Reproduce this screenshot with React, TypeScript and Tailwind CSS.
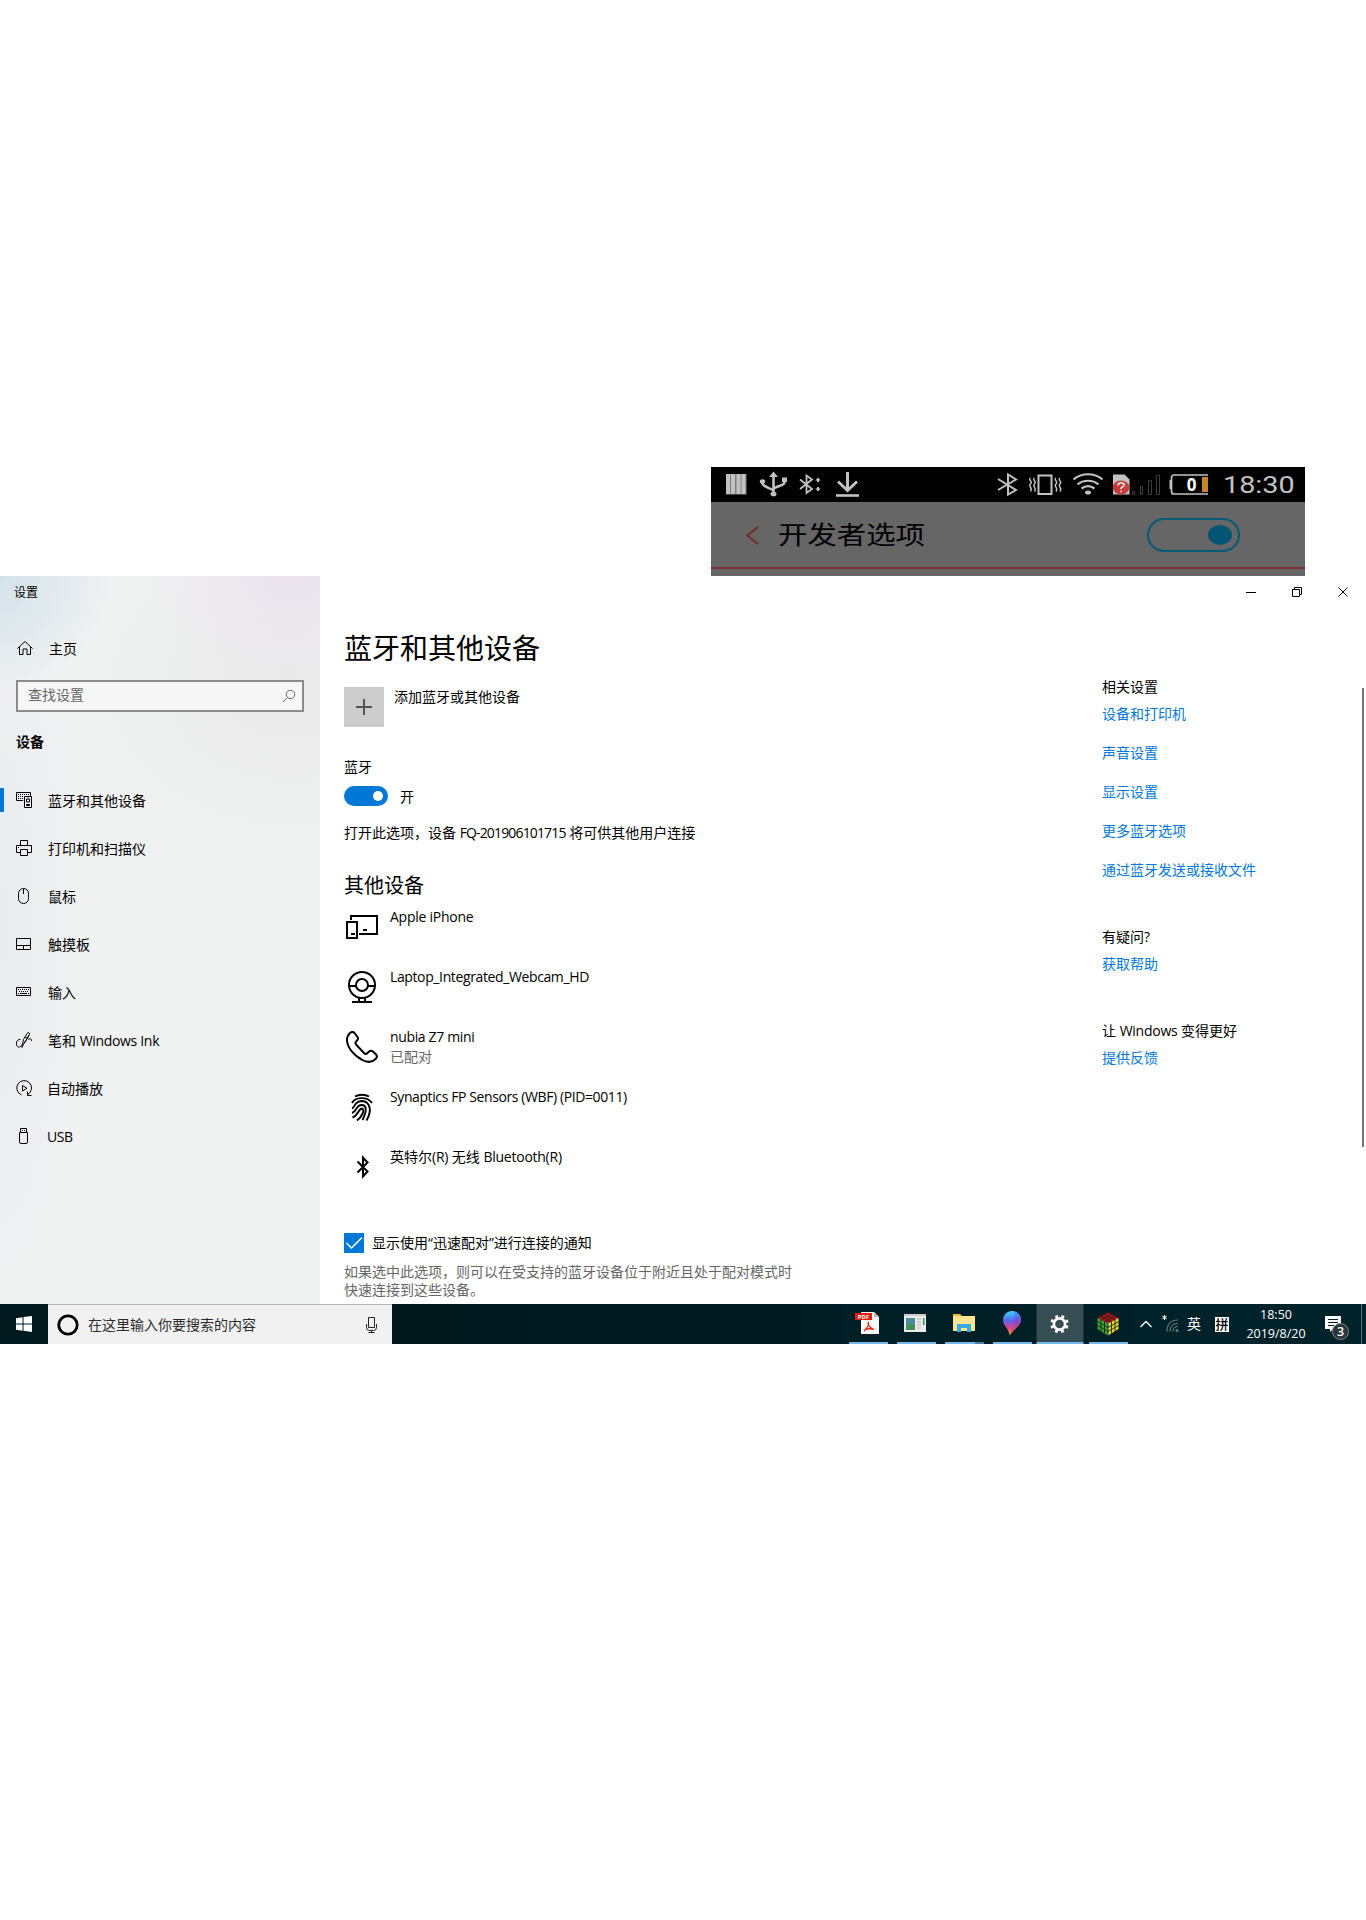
import type { ReactNode } from "react";

const FONT = "font-['Open_Sans','Noto_Sans_CJK_SC',sans-serif]";

function PhoneStatusBar() {
  return (
    <div className="flex h-[35px] bg-black text-[#c2c2c2]">
      <svg width="150" height="35" fill="none" stroke="#c2c2c2" strokeWidth="2">
        <path d="M15 7h20.500v20.500H15z" fill="#7e7e7e" stroke="none" />
        <path d="M17 7v20M22 7v20M27.500 7v20M32.500 7v20" strokeWidth="4" />
        <path d="M62.500 8v18M51.500 14.500v2c0 3.500 11 5 11 8M73.500 12.500v3c0 3.500-11 4-11 7" strokeWidth="2.600" />
        <path d="M58 10l4.500-5.500L67 10z" fill="#c2c2c2" stroke="none" />
        <ellipse cx="62.500" cy="27" rx="3" ry="2.300" fill="#c2c2c2" stroke="none" />
        <ellipse cx="51.500" cy="14.500" rx="2.700" ry="2.200" fill="#c2c2c2" stroke="none" />
        <path d="M71 10.500h5v4.500h-5z" fill="#c2c2c2" stroke="none" />
        <path d="M89 12.500l12 9.500-5.500 4V8.500l5.500 4-12 9.500" strokeWidth="1.800" />
        <path d="M107 12v3M107 20v3" />
        <path d="M104.300 13.500l2.700-3 2.700 3zM104.300 21.500l2.700 3 2.700-3z" fill="#c2c2c2" stroke="none" />
        <path d="M136.500 5v18M127 14.500l9.500 9 9.500-9" strokeWidth="3" />
        <path d="M125 28.500h23" strokeWidth="2.600" />
      </svg>
      <div className="grow" />
      <svg width="225" height="35" fill="none" stroke="#c2c2c2" strokeWidth="2">
        <g transform="translate(-103 0)">
          <path d="M118 12l18 11-8 4.500V7.500l8 5-18 10.500" strokeWidth="2" />
          <path d="M158.500 8.500h13v18.500h-13z" />
          <path d="M150.500 11c-3 2 3 3.500 0 6s3 3.500 0 7.500M154.500 11c-3 2 3 3.500 0 6s3 3.500 0 7.500M176 11c-3 2 3 3.500 0 6s3 3.500 0 7.500M180 11c-3 2 3 3.500 0 6s3 3.500 0 7.500" strokeWidth="1.400" />
          <path d="M193.500 12.500c8-7 21-7 29 0M197.500 17.500c6-5 15-5 21 0M201.500 21.500c4-3 9-3 13 0" strokeWidth="2.200" />
          <ellipse cx="208" cy="25.500" rx="3" ry="2" fill="#c2c2c2" stroke="none" />
          <path d="M233 7.500h11.500l5 5v15H233z" fill="#c2c2c2" stroke="none" />
          <ellipse cx="241" cy="20.500" rx="8.200" ry="7" fill="#c93a3a" stroke="none" />
          <path d="M238 18.500c0-3.500 6-3.500 6-.5 0 2-3 1.500-3 4M241 23.500v1.800" stroke="#ddd" strokeWidth="1.800" />
          <path d="M252.500 24.500h2v3h-2zM260.500 19.500h2v8h-2zM268.500 13.500h3v14h-3zM276.500 8.500h3v19h-3z" stroke="#3c3c3c" strokeWidth="1" />
          <rect x="291.500" y="8" width="39.500" height="19" rx="2.500" strokeWidth="1.700" />
          <path d="M290.500 13v9" strokeWidth="2" />
          <path d="M322 10h6v15h-6z" fill="#c6862d" stroke="none" />
        </g>
        <text x="208.500" y="23.500" textAnchor="middle" fontSize="17" fontWeight="700" fill="#fff" stroke="none" fontFamily="Open Sans">0</text>
      </svg>
      <div className="w-[97px] pl-[15px]">
        <span className="inline-block origin-left scale-x-[1.200] font-[Roboto] text-[24px] leading-[37px]">18:30</span>
      </div>
    </div>
  );
}

function PhoneHeader() {
  return (
    <div className="h-[74px] bg-[#666666]">
      <div className="flex h-[65px] items-center">
        <svg className="ml-[34px]" width="16" height="22" fill="none" stroke="#7d2226" strokeWidth="1.700">
          <path d="M13 3L2 11.500l11 8.500" />
        </svg>
        <span className="ml-[17px] inline-block w-[130px] origin-left scale-x-[1.200] whitespace-nowrap text-[24.500px] leading-[30px] text-black">开发者选项</span>
        <div className="ml-[239px] flex h-[34px] w-[93px] items-center justify-end rounded-[20px] border-2 border-[#075a76] pr-[6px]">
          <div className="h-[20px] w-[24px] rounded-[50%] bg-[#045473]" />
        </div>
      </div>
      <div className="h-[2px] bg-[#7e2f33]" />
    </div>
  );
}

function Glyph({ children, size = 16 }: { children: ReactNode; size?: number }) {
  return (
    <svg width={size} height={size} viewBox={`0 0 ${size} ${size}`} fill="none" stroke="#000" strokeWidth="1" className="shrink-0">
      {children}
    </svg>
  );
}

const NAV: { label: ReactNode; icon: ReactNode; active?: boolean }[] = [
  {
    label: "蓝牙和其他设备",
    active: true,
    icon: (
      <>
        <path d="M7 8.500H.5v-8h14V4M8.500 4.500h7v11h-7z" />
        <path d="M2 2.500h11M2 4.500h6M2 6.500h5" strokeDasharray="1 1" />
        <path d="M10.500 7h3v3h-3zM12 5.500v1M10.500 12.500h3v1h-3z" />
      </>
    ),
  },
  {
    label: "打印机和扫描仪",
    icon: <path d="M4.500 5.500v-5h7v5M4.500 12.500h-4v-7h15v7h-4M4.500 9.500h7v6h-7zM2 7.500h1" />,
  },
  {
    label: "鼠标",
    icon: <path d="M2.500 5.500a5 5 0 0 1 10 0v5a5 5 0 0 1-10 0zM7.500 1v5" />,
  },
  {
    label: "触摸板",
    icon: <path d="M.5 2.500h14v11H.5zM.5 9.500h14M7.500 9.500v4" />,
  },
  {
    label: "输入",
    icon: (
      <>
        <path d="M.5 3.500h14v8H.5zM4 9.500h7" />
        <path d="M2 5.500h11M3 7.500h10M2 9.500h12" strokeDasharray="1 1" />
      </>
    ),
  },
  {
    label: (
      <>
        笔和 <span className="tracking-[-0.320px]">Windows Ink</span>
      </>
    ),
    icon: (
      <path d="M6.500 12.500L7.500 7.500 11 1.500c1-1.500 3-1 2.500.8L11.500 6 7 13l-1 2.500zM4.500 7.500C.5 7-.5 12 1 14s4 1 5-1.500M9 5l2.500 1.500M12 7.500c2-1 4-1 3.500 1.500M13 3L8.500 11" />
    ),
  },
  {
    label: <span className="-ml-px">自动播放</span>,
    icon: (
      <>
        <path d="M5.500 14.900A7.400 7.400 0 1 1 11.500 14.600" />
        <path d="M6.500 5.500v5.500l4.500-2.700zM11.500 11.500v4h4" />
      </>
    ),
  },
  {
    label: <span className="-ml-px tracking-[-0.500px]">USB</span>,
    icon: <path d="M3.500 4.500h8v9.500a1.500 1.500 0 0 1-1.500 1.500H5A1.500 1.500 0 0 1 3.500 14zM4.500 4.500v-4h6v4M6 2.500h1M8 2.500h1" />,
  },
];

function Sidebar() {
  return (
    <aside className="w-[320px] shrink-0 bg-[#f0f1f1] bg-[radial-gradient(ellipse_110px_110px_at_0px_0px,#d3e2ea,transparent),radial-gradient(ellipse_140px_100px_at_290px_0px,#ebe4ee,transparent),radial-gradient(ellipse_220px_170px_at_290px_110px,#e9e9e9,transparent),radial-gradient(ellipse_80px_400px_at_0px_350px,#e8ecef,transparent)]">
      <div className="h-[32px] pl-[14px] text-[12px] leading-[34px]">设置</div>
      <div className="mt-[16px] flex h-[48px] items-center pl-[17px]">
        <Glyph>
          <path d="M.5 8.500L8 1.500l7.500 7M2.500 7v7.500h3.500V9h4v5.500h3.500V7" />
        </Glyph>
        <span className="ml-4">主页</span>
      </div>
      <div className="mt-[8px] ml-4 flex h-8 w-[288px] items-center justify-between border-2 border-[#8b8b8b] bg-[#f6f6f6] pr-[6px] pl-[10px]">
        <span className="-mt-[4px] text-[#666]">查找设置</span>
        <svg width="14" height="14" fill="none" stroke="#666">
          <circle cx="8.500" cy="5.500" r="4.200" />
          <path d="M5.500 8.500L1 13" />
        </svg>
      </div>
      <div className="mt-[18px] mb-[22px] h-6 pl-4 leading-6 font-bold">设备</div>
      <nav>
        {NAV.map((item, i) => (
          <div key={i} className="flex h-[48px] items-center">
            <div className={item.active ? "h-6 w-1 bg-[#0078d7]" : "h-6 w-1"} />
            <div className="ml-3">
              <Glyph>{item.icon}</Glyph>
            </div>
            <span className="ml-4">{item.label}</span>
          </div>
        ))}
      </nav>
    </aside>
  );
}

const DEVICES: { name: ReactNode; note?: string; icon: ReactNode }[] = [
  {
    name: <span className="tracking-[-0.250px]">Apple iPhone</span>,
    icon: (
      <>
        <path d="M5 9V5h26v18H13M1 11h10v16H1zM5 23h4M17 19h4" />
      </>
    ),
  },
  {
    name: <span className="tracking-[-0.380px]">Laptop_Integrated_Webcam_HD</span>,
    icon: (
      <>
        <circle cx="16" cy="14" r="13" />
        <circle cx="16" cy="14" r="6" />
        <path d="M3 15h7M22 15h7M13 27v3M19 27v3M6 31h20" />
      </>
    ),
  },
  {
    name: <span className="tracking-[-0.350px]">nubia Z7 mini</span>,
    note: "已配对",
    icon: (
      <path d="M3.500 2.500C5 .5 7.500.500 8.500 2l3 4c1 1.500.5 2.500-.5 3.500l-1.500 2c-.5 1 0 1.500 1 2.500l7.500 8c1.500 1.500 2.500 1 3.500 0l1.500-1.500c1-1 2.500-1 4 0l3 3c1.500 1.500 1 3-.5 4.500-3 3-8 4-14 .5C9 25 2 18 1 10 .7 7 1.500 4.500 3.500 2.500z" />
    ),
  },
  {
    name: <span className="tracking-[-0.400px]">Synaptics FP Sensors (WBF) (PID=0011)</span>,
    icon: (
      <g strokeWidth="1.900">
        <path d="M9 5.500c4-2.300 10-2.300 14 0M6 12c3-6 15-7 20 0" />
        <path d="M6 17.500c3-1 2-7 9.500-7.500C22 10 25 16 23.500 22c-.5 3-1.500 5-3 7.500" />
        <path d="M6 22c5-1.500 4-8 9.500-8 6 0 5 7 1 15" />
        <path d="M6.500 26.500c6-2 6-9 9.500-9 3.500 1-.5 9-5 12" />
      </g>
    ),
  },
  {
    name: (
      <>
        英特尔<span className="tracking-[-0.250px]">(R)</span> 无线 <span className="tracking-[-0.250px]">Bluetooth(R)</span>
      </>
    ),
    icon: <path d="M11.500 10.500l10 10L17 25.500V6.500l4.500 5-10 10" />,
  },
];

function Main() {
  return (
    <main className="w-[758px] pl-6">
      <h1 className="mt-[52px] h-[40px] text-[28px] leading-[40px]">蓝牙和其他设备</h1>
      <div className="mt-[19px] flex h-[40px]">
        <div className="flex size-[40px] items-center justify-center bg-[#cccccc]">
          <svg width="16" height="16" stroke="#555" strokeWidth="2">
            <path d="M0 8h16M8 0v16" />
          </svg>
        </div>
        <span className="ml-[10px] leading-5">添加蓝牙或其他设备</span>
      </div>
      <div className="mt-[30px] h-5 leading-5">蓝牙</div>
      <div className="mt-[9px] flex h-5 items-center">
        <div className="flex h-5 w-[44px] items-center justify-end rounded-full bg-[#0078d7] pr-[5px]">
          <div className="size-[10px] rounded-full bg-white" />
        </div>
        <span className="ml-3">开</span>
      </div>
      <div className="mt-[17px] h-5 leading-5">
        打开此选项，设备 <span className="tracking-[-0.850px]">FQ-201906101715</span> 将可供其他用户连接
      </div>
      <h2 className="mt-[29px] h-[28px] text-[20px] leading-[28px]">其他设备</h2>
      {DEVICES.map((d, i) => (
        <div key={i} className="flex h-[60px]">
          <div className="mt-[11px] ml-[2px]">
            <svg width="32" height="32" fill="none" stroke="#000" strokeWidth="2">
              {d.icon}
            </svg>
          </div>
          <div className="mt-[7px] ml-3">
            <div className="h-5 leading-5">{d.name}</div>
            {d.note && <div className="h-5 leading-5 text-[#666]">{d.note}</div>}
          </div>
        </div>
      ))}
      <div className="mt-[33px] flex h-5 items-center">
        <div className="size-5 bg-[#0078d7]">
          <svg width="20" height="20" fill="none" stroke="#fff" strokeWidth="1.500">
            <path d="M2.500 10l5 5L18 4.500" />
          </svg>
        </div>
        <span className="-mt-px ml-2">显示使用“迅速配对”进行连接的通知</span>
      </div>
      <p className="mt-[10px] leading-[18px] whitespace-nowrap text-[#666]">
        如果选中此选项，则可以在受支持的蓝牙设备位于附近且处于配对模式时
        <br />
        快速连接到这些设备。
      </p>
    </main>
  );
}

function WindowControls() {
  return (
    <div className="-ml-[2px] flex h-8 items-center pl-[146px]">
      <svg width="102" height="12" fill="none" stroke="#000" strokeWidth="1">
        <path d="M0 6.500h10M46.500 3.500h7v7h-7zM48.500 3.500v-2h7v7h-2M92.500 1.500l9 9M101.500 1.500l-9 9" />
      </svg>
    </div>
  );
}

function Related() {
  return (
    <section className="w-[260px]">
      <WindowControls />
      <div className="mt-[69px] h-5 leading-5">相关设置</div>
      <div className="mt-[7px] flex flex-col gap-[19px] leading-5 text-[#0078d7]">
        {["设备和打印机", "声音设置", "显示设置", "更多蓝牙选项", "通过蓝牙发送或接收文件"].map((t) => (
          <a key={t}>{t}</a>
        ))}
      </div>
      <div className="mt-[47px] leading-5">有疑问?</div>
      <div className="mt-[7px] leading-5 text-[#0078d7]">获取帮助</div>
      <div className="mt-[47px] leading-5">
        让 <span className="tracking-[-0.250px]">Windows</span> 变得更好
      </div>
      <div className="mt-[7px] leading-5 text-[#0078d7]">提供反馈</div>
    </section>
  );
}

function PdfIcon() {
  return (
    <svg width="26" height="24" className="-ml-[2px]">
      <path d="M7 1h13l5 5v17H7z" fill="#fafafa" />
      <path d="M20 1v5h5z" fill="#bbb" />
      <path d="M1 2h17v7H1z" fill="#e01f0c" />
      <text x="9.500" y="7.800" fontSize="6" fontWeight="700" fill="#fff" textAnchor="middle" fontFamily="Open Sans">PDF</text>
      <path d="M14 11c2 2 0 5-4 9M14 12c0 4 3 5 6 6.500-3-1-6-1-9 0" stroke="#e0261a" strokeWidth="1.300" fill="none" />
    </svg>
  );
}

function AppWindowIcon() {
  return (
    <svg width="24" height="20" className="-ml-[2px]">
      <path d="M1 1h22v18H1z" fill="#e9ebea" />
      <path d="M1 1h22v2H1z" fill="#c8cccb" />
      <path d="M3 5h9v12H3z" fill="#4f8b9b" />
      <path d="M3 17V12l4-2 5 4v3z" fill="#479058" />
      <path d="M14 6h4M14 9h4M14 12h4M14 15h4" stroke="#b3b5b5" />
      <path d="M20 5h1.500v7H20z" fill="#30935e" />
    </svg>
  );
}

function FolderIcon() {
  return (
    <svg width="24" height="20">
      <path d="M1 18V1h7l1.500 2H23v15z" fill="#ffe48f" />
      <path d="M1 3V1h7l1.500 2z" fill="#e9b93f" />
      <path d="M5 19v-8h14v8h-4v-4H9v4z" fill="#33abe3" />
    </svg>
  );
}

function Paint3DIcon() {
  return (
    <svg width="20" height="25" viewBox="0 0 20 25">
      <defs>
        <linearGradient id="dropLeft" x1="0" y1="0" x2="0" y2="1">
          <stop offset="0" stopColor="#38d5fb" />
          <stop offset=".4" stopColor="#5b63e8" />
          <stop offset=".7" stopColor="#e3408f" />
          <stop offset="1" stopColor="#ffb228" />
        </linearGradient>
        <linearGradient id="dropRight" x1="0" y1="0" x2="0" y2="1">
          <stop offset="0" stopColor="#1fa7ee" />
          <stop offset=".45" stopColor="#8444d6" />
          <stop offset="1" stopColor="#e2543c" />
        </linearGradient>
      </defs>
      <path d="M10 0c5 0 9 4 9 9 0 6-8 9-11.500 15.500C7.500 18 1 15 1 9c0-5 4-9 9-9z" fill="url(#dropLeft)" />
      <path d="M12 .5c4 1 7 4 7 8.500 0 5-6 8.500-9.500 12.500C9 15 15 9 12 .5z" fill="url(#dropRight)" />
    </svg>
  );
}

function GearIcon() {
  return (
    <svg width="20" height="20" fill="none" stroke="#fff" className="mt-px">
      <circle cx="10" cy="10" r="5.600" strokeWidth="2.600" />
      <circle cx="10" cy="10" r="7.900" strokeWidth="2.600" strokeDasharray="2.900 3.305" strokeDashoffset="-1.650" />
    </svg>
  );
}

function CubeIcon() {
  return (
    <svg width="22" height="24" className="mt-px">
      <path d="M11 .5L21.500 6 11 11.500.5 6z" fill="#b80f1c" />
      <path d="M.5 6L11 11.500v12L.5 17z" fill="#3aa53a" />
      <path d="M21.500 6L11 11.500v12L21.500 17z" fill="#dfd83c" />
      <path d="M4 4.200l10.500 5.500M7.500 2.400L18 7.900M18 4.200L7.500 9.700M14.500 2.400L4 7.900v11.400M7.500 9.700v11.500M14.500 9.700v11.500M18 7.900v11.400M.5 9.700L11 15.500l10.500-5.800M.5 13.400L11 19.500l10.500-6.100M11 11.500v12" stroke="#1c2515" fill="none" strokeWidth=".9" />
    </svg>
  );
}

const TASKS = [
  { icon: <PdfIcon /> },
  { icon: <AppWindowIcon /> },
  { icon: <FolderIcon />, stacked: true },
  { icon: <Paint3DIcon /> },
  { icon: <GearIcon />, active: true },
  { icon: <CubeIcon /> },
];

function Taskbar() {
  return (
    <div className="flex h-[40px] bg-[#001a1f] text-white">
      <div className="flex w-12 items-center justify-center">
        <svg width="16" height="16" fill="#fff">
          <path d="M0 2.300L6.500 1.300v6.200H0zM7.500 1.100L16 0v7.500H7.500zM0 8.500h6.500v6.200L0 13.700zM7.500 8.500H16V16l-8.500-1.200z" />
        </svg>
      </div>
      <div className="flex w-[344px] items-center border-t border-[#b4b9b9] bg-[#f1f1f1] text-[#2b2b2b]">
        <svg className="ml-[9px]" width="22" height="22" fill="none">
          <circle cx="11" cy="11" r="9.200" stroke="#000" strokeWidth="2.800" />
        </svg>
        <span className="ml-[9px] grow">在这里输入你要搜索的内容</span>
        <svg className="mr-[14px]" width="13" height="18" fill="none" stroke="#222">
          <path d="M3.500 1.500h6v10h-6zM1.500 8v3.500a3 3 0 0 0 3 3h4a3 3 0 0 0 3-3V8M6.500 14.500v2M3.500 16.500h6" />
        </svg>
      </div>
      <div className="grow bg-linear-to-r from-[#00181c] to-[#001d24]" />
      <div className="flex bg-[#001f27]">
        {TASKS.map((t, i) => (
          <div key={i} className="flex w-12 flex-col items-center">
            <div className={t.active ? "flex h-[38px] w-[47px] -translate-x-[0.500px] items-center justify-center bg-[#364d54]" : "flex h-[38px] w-[39px] items-center justify-center"}>{t.icon}</div>
            <div className={t.active ? "h-[2px] w-[47px] -translate-x-[0.500px] bg-[#76b9ed]" : "flex h-[2px] w-[39px] justify-end bg-[#76b9ed]"}>
              {t.stacked && <div className="w-[9px] bg-[#4f81a3]" />}
            </div>
          </div>
        ))}
      </div>
      <div className="flex w-[234px] items-center bg-[#00222a]">
        <svg className="ml-[7px]" width="14" height="10" fill="none" stroke="#fff" strokeWidth="1.300">
          <path d="M1.500 8L7 2.500 12.500 8" />
        </svg>
        <svg className="ml-[9px]" width="18" height="20" fill="none" stroke="#66787d" strokeWidth="1.200">
          <path d="M5 17.500C5 10 9 6 16 6M8 17.500c0-5 3-8 8-8M11 17.500c0-3 2-5 5-5" />
          <circle cx="15" cy="16.500" r="1.500" fill="#66787d" stroke="none" />
          <path d="M2.500 1v5M.3 2.200l4.400 2.600M4.700 2.200L.3 4.800" stroke="#fff" strokeWidth="1" />
        </svg>
        <span className="-mt-px ml-[7px]">英</span>
        <span className="ml-[14px] flex h-[15px] w-[14px] items-center justify-center bg-white text-[13px] leading-[15px] font-medium text-black">拼</span>
        <div className="ml-[14px] w-[66px] text-center text-[12.500px] leading-[19px]">
          <div>18:50</div>
          <div>2019/8/20</div>
        </div>
        <svg className="ml-[15px]" width="26" height="36">
          <path d="M1 10h16v13H9l-3 3v-3H1z" fill="#fff" />
          <path d="M4 13.500h10M4 16.500h10M4 19.500h6" stroke="#00222a" />
          <circle cx="16.500" cy="25.500" r="8" fill="#2e3537" stroke="#7d8588" />
          <text x="16.500" y="30" fontSize="12.500" fontWeight="600" textAnchor="middle" fill="#fff" fontFamily="Open Sans">3</text>
        </svg>
        <div className="ml-auto h-full w-[5px] border-l border-[#5b7076]" />
      </div>
    </div>
  );
}

export default function App() {
  return (
    <div className={`h-[1920px] w-[1366px] overflow-hidden bg-white pt-[467px] text-[14px] text-black ${FONT}`}>
      <div className="ml-[711px] w-[594px]">
        <PhoneStatusBar />
        <PhoneHeader />
      </div>
      <div className="flex h-[728px] overflow-hidden">
        <Sidebar />
        <Main />
        <div className="ml-[24px] flex">
          <Related />
          <div className="mt-[112px] h-[459px] w-[2px] bg-[#777]" />
        </div>
      </div>
      <Taskbar />
    </div>
  );
}
